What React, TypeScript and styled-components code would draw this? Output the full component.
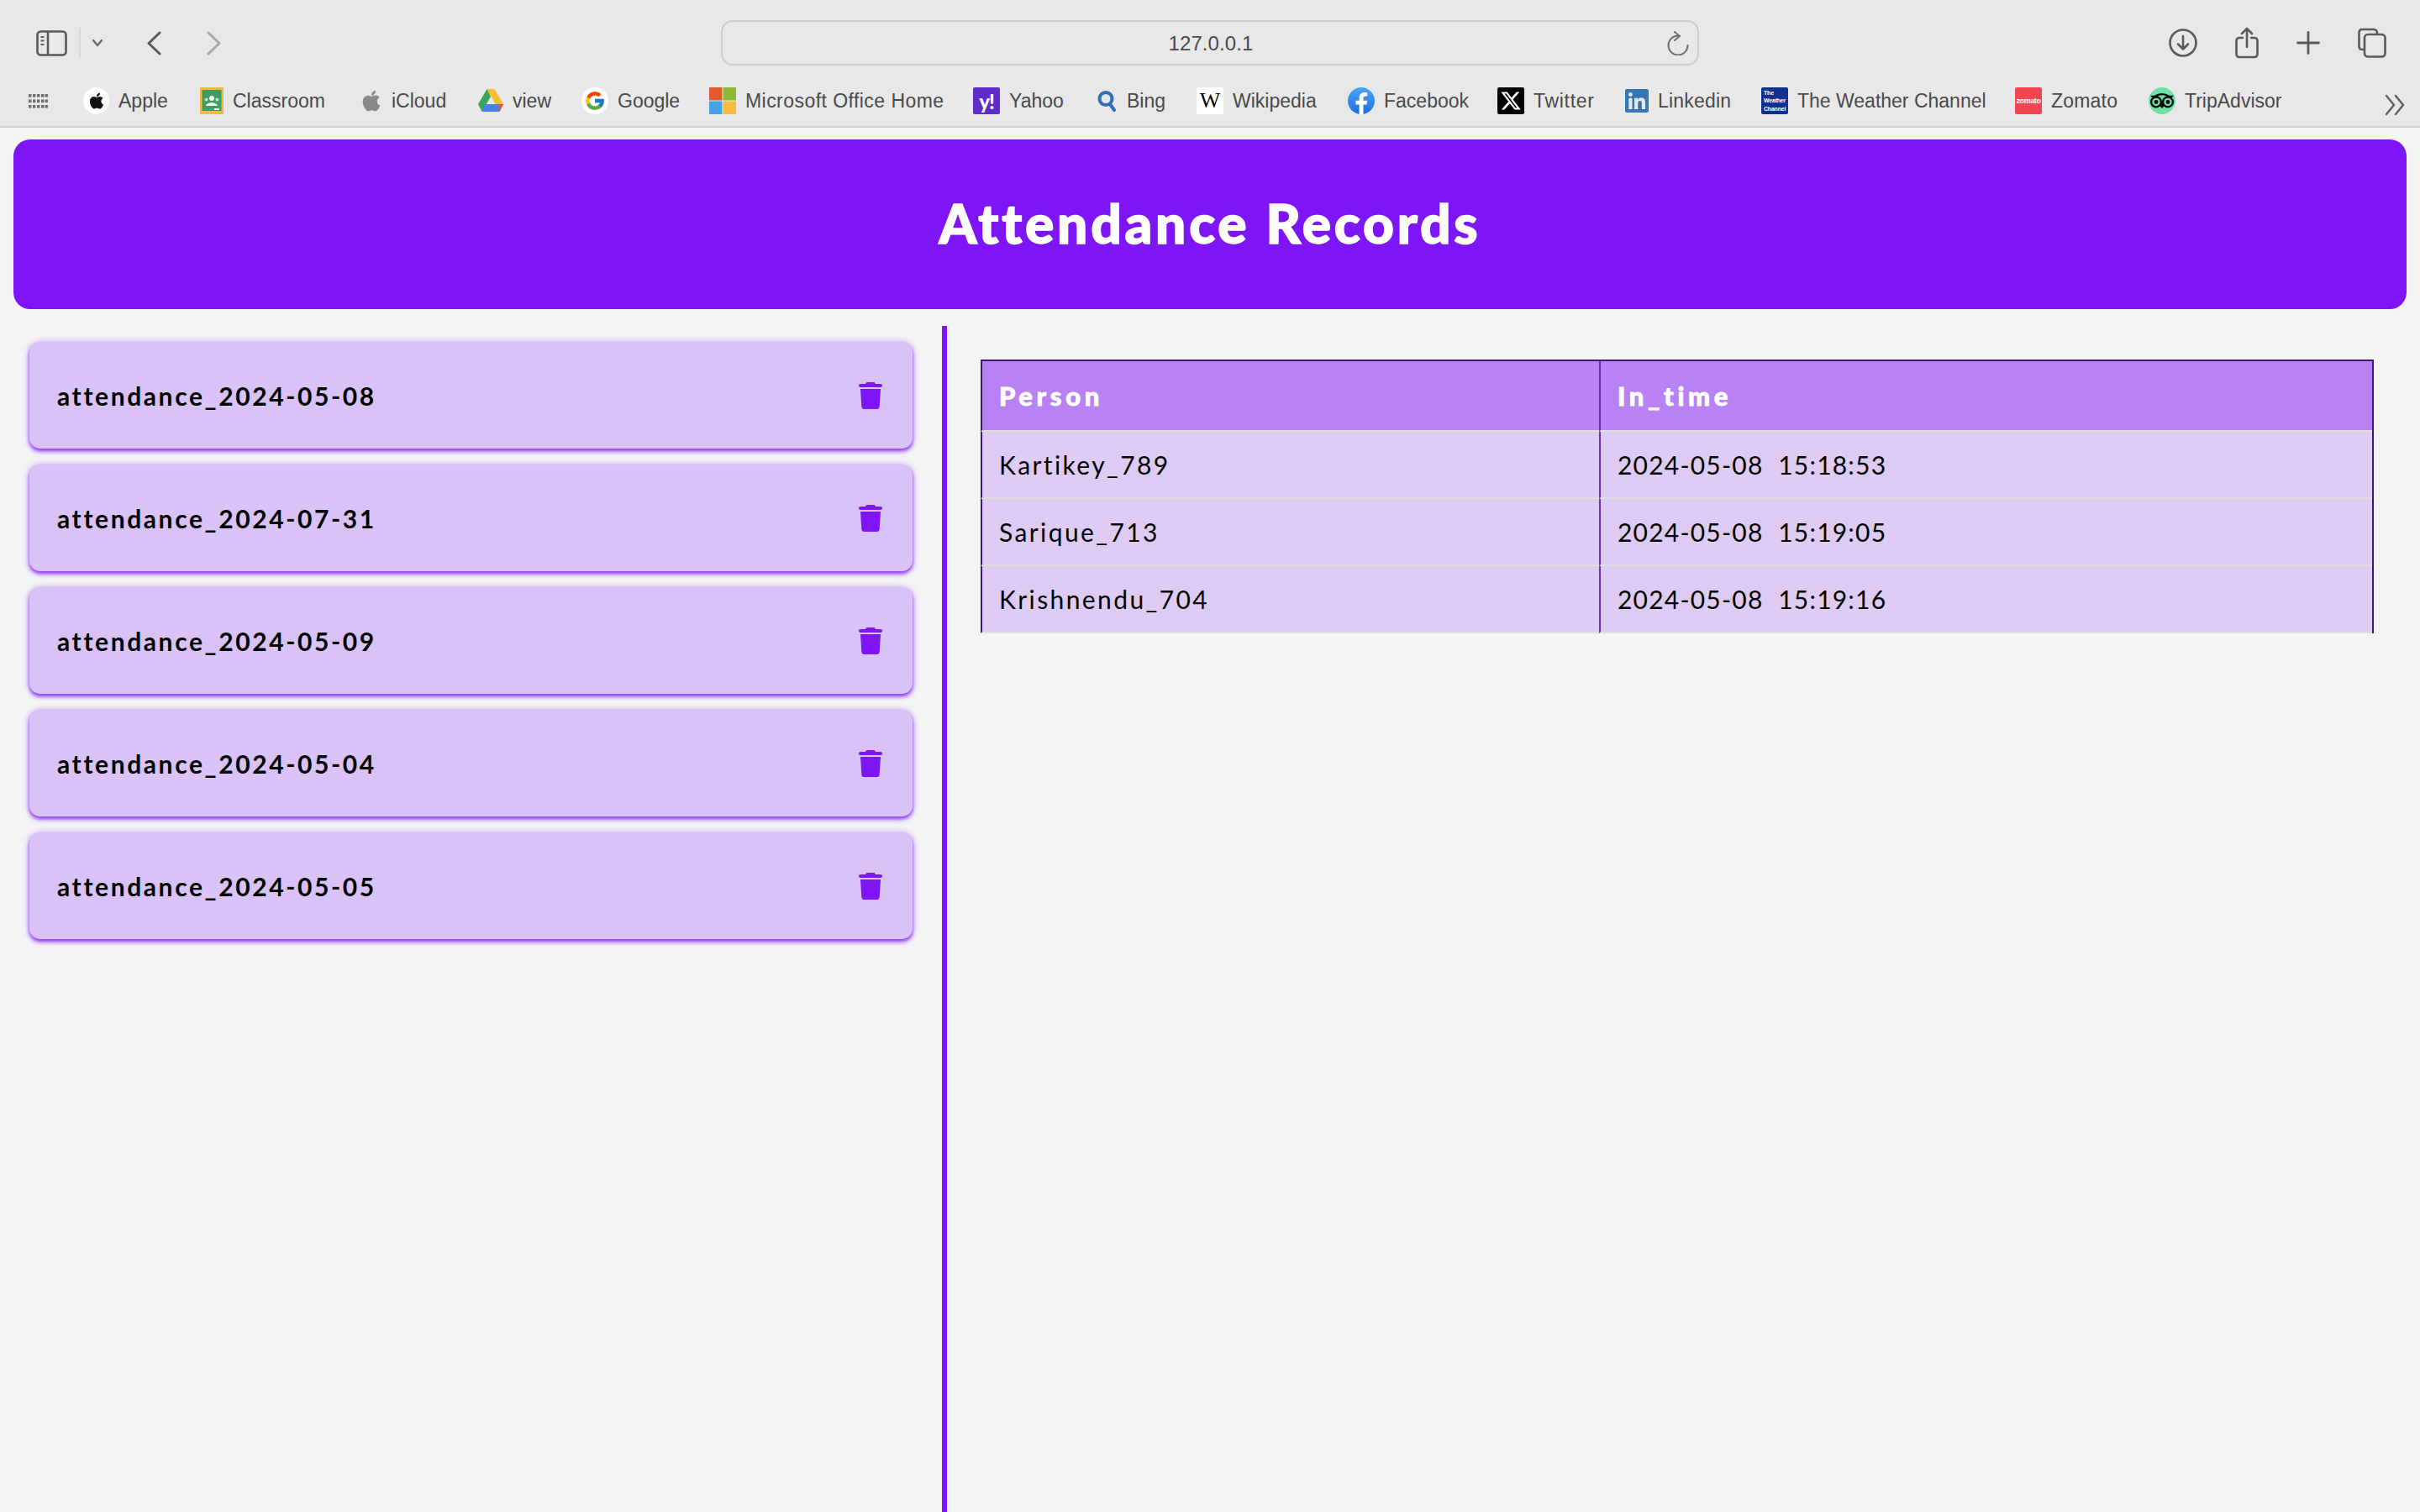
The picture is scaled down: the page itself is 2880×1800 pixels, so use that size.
import { ReactNode } from 'react';
import styled, { createGlobalStyle } from 'styled-components';
import { FaApple, FaTrash, FaLinkedin, FaXTwitter } from 'react-icons/fa6';
import { FcGoogle } from 'react-icons/fc';
import { SiTripadvisor } from 'react-icons/si';

const PURPLE = '#7d15f6';
const CHROME_INK = '#4a4a4a';

const GlobalStyle = createGlobalStyle`
  * { box-sizing: border-box; }
  html, body { margin: 0; padding: 0; }
  body { background: #f4f4f4; font-family: "Lato", "Open Sans", sans-serif; }
`;

const Page = styled.div`
  display: flex;
  flex-direction: column;
  height: 1800px;
  overflow: hidden;
`;

const Chrome = styled.div`
  height: 152px;
  flex-shrink: 0;
  padding-top: 24px;
  background: #e8e8e8;
  border-bottom: 2px solid #d0d0d0;
  font-family: "Liberation Sans", Arial, sans-serif;
  color: ${CHROME_INK};
`;

const Toolbar = styled.div`
  display: grid;
  grid-template-columns: 858px 1164px 1fr;
  height: 54px;
`;

const ToolbarLeft = styled.div`
  display: flex;
  align-items: center;
  padding-left: 43px;
`;

const Separator = styled.span`
  width: 2px;
  height: 36px;
  margin: 0 13px 0 14px;
  background: #d8d8d8;
`;

const NavButton = styled.span<{ $gap: number }>`
  display: flex;
  margin-left: ${(p) => p.$gap}px;
`;

const UrlBar = styled.div`
  display: flex;
  align-items: center;
  justify-content: center;
  position: relative;
  padding: 2px 0 0 2px;
  border: 2px solid #cdcdcd;
  border-radius: 14px;
  font-size: 24px;
  letter-spacing: 0.1px;
`;

const Reload = styled.span`
  position: absolute;
  right: 10px;
  top: 11px;
  display: flex;
`;

const ToolbarRight = styled.div`
  display: flex;
  align-items: center;
  justify-content: flex-end;
  gap: 45px;
  padding-right: 40px;
`;

const BookmarkBar = styled.div`
  display: flex;
  align-items: center;
  height: 32px;
  margin-top: 26px;
  position: relative;
  padding-left: 34px;
`;

const AppsGrid = styled.span`
  display: flex;
  width: 65px;
`;

const Bookmark = styled.div<{ $width: number; $track?: number }>`
  display: flex;
  align-items: center;
  width: ${(p) => p.$width}px;
  flex-shrink: 0;
  white-space: nowrap;
  font-size: 23px;
  letter-spacing: ${(p) => p.$track || 0}px;
`;

const FavSlot = styled.span<{ $width: number }>`
  display: flex;
  align-items: center;
  justify-content: center;
  width: ${(p) => p.$width}px;
  height: 32px;
  flex-shrink: 0;
  margin-right: 11px;
`;

const FavTile = styled.span<{ $bg: string; $color?: string; $round?: boolean }>`
  display: flex;
  align-items: center;
  justify-content: center;
  width: 32px;
  height: 32px;
  overflow: hidden;
  background: ${(p) => p.$bg};
  color: ${(p) => p.$color || '#fff'};
  border-radius: ${(p) => (p.$round ? '50%' : '2px')};
`;

const YahooMark = styled.span`
  font: 900 24px "Lato", sans-serif;
  letter-spacing: -1px;
`;

const WikiMark = styled.span`
  font: 400 26px/32px "Liberation Serif", serif;
`;

const WeatherMark = styled.span`
  font: 700 7px/9.5px "Liberation Sans Narrow", "Liberation Sans", sans-serif;
  padding-left: 3px;
  width: 100%;
  letter-spacing: -0.2px;
`;

const ZomatoMark = styled.span`
  font: 700 9px "Liberation Sans", sans-serif;
  letter-spacing: -0.4px;
`;

const MoreButton = styled.span`
  position: absolute;
  left: 2838px;
  top: 8px;
  display: flex;
`;

const Banner = styled.header`
  display: flex;
  align-items: center;
  justify-content: center;
  flex-shrink: 0;
  height: 202px;
  margin: 14px 16px 0;
  padding-bottom: 3px;
  background: ${PURPLE};
  border-radius: 20px;
`;

const Title = styled.h1`
  margin: 0;
  font-family: "Lato", sans-serif;
  font-weight: 900;
  font-size: 64px;
  line-height: 1;
  letter-spacing: 3.8px;
  color: #fff;
  -webkit-text-stroke: 1.5px #fff;
`;

const Columns = styled.div`
  display: flex;
  flex: 1;
  margin-top: 20px;
  min-height: 0;
`;

const FileList = styled.aside`
  display: flex;
  flex-direction: column;
  gap: 19px;
  width: 1127px;
  flex-shrink: 0;
  padding: 19px 35px 0;
  border-right: 6px solid ${PURPLE};
`;

const FileCard = styled.div`
  display: flex;
  align-items: center;
  justify-content: space-between;
  height: 127px;
  padding: 0 36px 0 33px;
  background: #d8c2f6;
  border-radius: 13px;
  box-shadow: 0 3px 4px rgba(125, 21, 246, 0.8), 0 1px 10px rgba(125, 21, 246, 0.4);
`;

const FileName = styled.span`
  font-weight: 700;
  font-size: 30px;
  letter-spacing: 2.6px;
  color: #000;
`;

const DeleteIcon = styled(FaTrash)`
  width: 28px;
  height: 32px;
  color: ${PURPLE};
`;

const TablePanel = styled.main`
  flex: 1;
  padding: 40px 57px 0 40px;
`;

const RecordTable = styled.table`
  width: 100%;
  table-layout: fixed;
  border-collapse: separate;
  border-spacing: 0;
  border-top: 2px solid #3a1a6e;
  border-right: 2px solid #3a1a6e;
`;

const HeadCell = styled.th<{ $width: number; $first?: boolean }>`
  width: ${(p) => p.$width}px;
  height: 84px;
  padding: 0 0 0 20px;
  text-align: left;
  background: #b882f4;
  color: #fff;
  font-weight: 900;
  font-size: 31px;
  letter-spacing: 4.6px;
  -webkit-text-stroke: 0.8px #fff;
  border-left: 2px solid ${(p) => (p.$first ? '#3a1a6e' : '#6a2db0')};
  border-bottom: 2px solid #dddddd;
`;

const BodyCell = styled.td<{ $first?: boolean; $track: number }>`
  height: 80px;
  padding: 0 0 0 20px;
  background: #ddcbf3;
  color: #000;
  font-size: 30px;
  letter-spacing: ${(p) => p.$track}px;
  white-space: pre;
  border-left: 2px solid ${(p) => (p.$first ? '#3a1a6e' : '#6a2db0')};
  border-bottom: 2px solid #dddddd;
`;

const SidebarIcon = () => (
  <svg width="37" height="31" viewBox="0 0 37 31" fill="none" stroke="#5a5a5a" strokeWidth="2.6">
    <rect x="1.5" y="1.5" width="34" height="28" rx="4" />
    <path d="M14 1.5v28" />
    <path d="M5.5 8h4M5.5 12.5h4M5.5 17h4" strokeWidth="2" />
  </svg>
);

const ChevronSmall = () => (
  <svg width="14" height="10" viewBox="0 0 14 10" fill="none" stroke="#6a6a6a" strokeWidth="2.4" strokeLinecap="round" strokeLinejoin="round">
    <path d="M2 2l5 6 5-6" />
  </svg>
);

const Chevron = ({ flip, color }: { flip?: boolean; color: string }) => (
  <svg width="18" height="29" viewBox="0 0 18 29" fill="none" stroke={color} strokeWidth="3" strokeLinecap="round" strokeLinejoin="round">
    <path d={flip ? 'M2 2l13 12.5L2 27' : 'M16 2L3 14.5 16 27'} />
  </svg>
);

const ReloadIcon = () => (
  <svg width="26" height="29" viewBox="0 0 26 29" fill="none" stroke="#6e6e6e" strokeWidth="2" strokeLinecap="round" strokeLinejoin="round">
    <path d="M13 5.5A11.5 11.5 0 1 0 24.5 17" />
    <path d="M9 1l6 5-6 5" />
  </svg>
);

const DownloadIcon = () => (
  <svg width="34" height="34" viewBox="0 0 34 34" fill="none" stroke="#5a5a5a" strokeWidth="2.6" strokeLinecap="round" strokeLinejoin="round">
    <circle cx="17" cy="17" r="15.5" />
    <path d="M17 9v15M11 18.5l6 6 6-6" />
  </svg>
);

const ShareIcon = () => (
  <svg width="28" height="38" viewBox="0 0 28 38" fill="none" stroke="#5a5a5a" strokeWidth="2.6" strokeLinecap="round" strokeLinejoin="round">
    <path d="M9 13H5a3.5 3.5 0 0 0-3.5 3.5v16A3.5 3.5 0 0 0 5 36h18a3.5 3.5 0 0 0 3.5-3.5v-16A3.5 3.5 0 0 0 23 13h-4" />
    <path d="M14 24V2M8 8l6-6 6 6" />
  </svg>
);

const PlusIcon = () => (
  <svg width="28" height="28" viewBox="0 0 28 28" fill="none" stroke="#5a5a5a" strokeWidth="2.8" strokeLinecap="round">
    <path d="M14 1.5v25M1.5 14h25" />
  </svg>
);

const TabsIcon = () => (
  <svg width="34" height="36" viewBox="0 0 34 36" fill="none" stroke="#5a5a5a" strokeWidth="2.6" strokeLinejoin="round">
    <path d="M8 26H5a3.5 3.5 0 0 1-3.5-3.5v-17A3.5 3.5 0 0 1 5 2h14a4 4 0 0 1 4 4v2" />
    <rect x="8" y="8" width="24.5" height="26.5" rx="4" />
  </svg>
);

const AppsIcon = () => (
  <svg width="23" height="17" viewBox="0 0 23 17" fill="#6e6e6e">
    {[0, 6.5, 13].map((y) =>
      [0, 5, 10, 15, 19.5].map((x) => <rect key={`${x}-${y}`} x={x} y={y} width="3.4" height="3.6" />)
    )}
  </svg>
);

const DoubleChevron = () => (
  <svg width="24" height="26" viewBox="0 0 24 26" fill="none" stroke="#5e5e5e" strokeWidth="2.4" strokeLinecap="round" strokeLinejoin="round">
    <path d="M2 2l9 11-9 11M13 2l9 11-9 11" />
  </svg>
);

const ClassroomIcon = () => (
  <svg width="28" height="32" viewBox="0 0 28 32">
    <rect width="28" height="32" rx="1" fill="#f4b942" />
    <rect x="2.5" y="3" width="23" height="25" fill="#3f9f62" />
    <circle cx="14" cy="13" r="3" fill="#fff" />
    <path d="M7 22c1-5 13-5 14 0z" fill="#fff" />
    <circle cx="7.5" cy="14.5" r="2" fill="#bfe3cb" />
    <circle cx="20.5" cy="14.5" r="2" fill="#bfe3cb" />
    <rect x="17" y="25" width="6" height="2" fill="#fff" />
  </svg>
);

const DriveIcon = () => (
  <svg width="30" height="30" viewBox="0 0 30 30">
    <path d="M10.5 1h9L30 19h-9.5z" fill="#f5c02f" />
    <path d="M10.5 1L0 19l4.6 9 10.4-18z" fill="#3fa35b" />
    <path d="M8 19h22l-4.6 9H4.6z" fill="#4a7fe8" />
    <path d="M25.4 28L30 19h-5z" fill="#e8533c" />
  </svg>
);

const WindowsIcon = () => (
  <svg width="32" height="32" viewBox="0 0 32 32">
    <rect width="15.5" height="15.5" fill="#e25b30" />
    <rect x="16.5" width="15.5" height="15.5" fill="#8cb832" />
    <rect y="16.5" width="15.5" height="15.5" fill="#45a3ec" />
    <rect x="16.5" y="16.5" width="15.5" height="15.5" fill="#f6bc3c" />
  </svg>
);

const BingIcon = () => (
  <svg width="23" height="27" viewBox="0 0 23 27" fill="none" stroke="#2f6db5" strokeWidth="4" strokeLinecap="round">
    <circle cx="10" cy="10.5" r="7.5" />
    <path d="M15 17l5 7" />
  </svg>
);

const FacebookIcon = () => (
  <svg width="32" height="32" viewBox="0 0 32 32">
    <defs>
      <linearGradient id="fbGrad" x1="0" y1="0" x2="0" y2="1">
        <stop offset="0" stopColor="#4fa3f7" />
        <stop offset="1" stopColor="#1a6fe0" />
      </linearGradient>
    </defs>
    <circle cx="16" cy="16" r="16" fill="url(#fbGrad)" />
    <path d="M18.5 32V20.5h4l.7-4.7h-4.7v-3c0-1.4.6-2.4 2.6-2.4h2.2V6.4c-1-.2-2.3-.3-3.4-.3-3.9 0-6.3 2.3-6.3 6.2v3.5H9.5v4.7h4.1V32z" fill="#fff" />
  </svg>
);

type BookmarkData = { label: string; width: number; slot: number; track?: number; fav: ReactNode };

const BOOKMARKS: BookmarkData[] = [
  { label: 'Apple', width: 139, slot: 31, fav: <FavTile $bg="#fff" $color="#111" $round><FaApple size={22} /></FavTile> },
  { label: 'Classroom', width: 191, slot: 28, fav: <ClassroomIcon /> },
  { label: 'iCloud', width: 140, slot: 26, fav: <FaApple size={28} color="#8a8a8a" /> },
  { label: 'view', width: 123, slot: 30, fav: <DriveIcon /> },
  { label: 'Google', width: 152, slot: 32, fav: <FavTile $bg="#fff" $round><FcGoogle size={26} /></FavTile> },
  { label: 'Microsoft Office Home', width: 314, slot: 32, track: 0.45, fav: <WindowsIcon /> },
  { label: 'Yahoo', width: 147, slot: 32, fav: <FavTile $bg="#5f2bc9"><YahooMark>y!</YahooMark></FavTile> },
  { label: 'Bing', width: 119, slot: 25, fav: <BingIcon /> },
  { label: 'Wikipedia', width: 180, slot: 32, fav: <FavTile $bg="#fff" $color="#000"><WikiMark>W</WikiMark></FavTile> },
  { label: 'Facebook', width: 178, slot: 32, fav: <FacebookIcon /> },
  { label: 'Twitter', width: 152, slot: 32, track: 0.7, fav: <FavTile $bg="#000"><FaXTwitter size={26} /></FavTile> },
  { label: 'Linkedin', width: 162, slot: 28, track: 0.2, fav: <FaLinkedin size={32} color="#3577b5" /> },
  { label: 'The Weather Channel', width: 302, slot: 32, fav: <FavTile $bg="#12308f"><WeatherMark>The<br />Weather<br />Channel</WeatherMark></FavTile> },
  { label: 'Zomato', width: 159, slot: 32, track: 0.2, fav: <FavTile $bg="#ef4650"><ZomatoMark>zomato</ZomatoMark></FavTile> },
  { label: 'TripAdvisor', width: 170, slot: 32, fav: <FavTile $bg="#6fe0a8" $color="#0a0a0a" $round><SiTripadvisor size={28} /></FavTile> },
];

const FILES = [
  'attendance_2024-05-08',
  'attendance_2024-07-31',
  'attendance_2024-05-09',
  'attendance_2024-05-04',
  'attendance_2024-05-05',
];

const RECORDS = [
  ['Kartikey_789', '2024-05-08  15:18:53'],
  ['Sarique_713', '2024-05-08  15:19:05'],
  ['Krishnendu_704', '2024-05-08  15:19:16'],
];

export default function App() {
  return (
    <Page>
      <GlobalStyle />
      <Chrome>
        <Toolbar>
          <ToolbarLeft>
            <SidebarIcon />
            <Separator />
            <ChevronSmall />
            <NavButton $gap={51}><Chevron color="#5a5a5a" /></NavButton>
            <NavButton $gap={54}><Chevron flip color="#a8a8a8" /></NavButton>
          </ToolbarLeft>
          <UrlBar>
            127.0.0.1
            <Reload><ReloadIcon /></Reload>
          </UrlBar>
          <ToolbarRight>
            <DownloadIcon />
            <ShareIcon />
            <PlusIcon />
            <TabsIcon />
          </ToolbarRight>
        </Toolbar>
        <BookmarkBar>
          <AppsGrid><AppsIcon /></AppsGrid>
          {BOOKMARKS.map((b) => (
            <Bookmark key={b.label} $width={b.width} $track={b.track}>
              <FavSlot $width={b.slot}>{b.fav}</FavSlot>
              {b.label}
            </Bookmark>
          ))}
          <MoreButton><DoubleChevron /></MoreButton>
        </BookmarkBar>
      </Chrome>
      <Banner>
        <Title>Attendance Records</Title>
      </Banner>
      <Columns>
        <FileList>
          {FILES.map((name) => (
            <FileCard key={name}>
              <FileName>{name}</FileName>
              <DeleteIcon />
            </FileCard>
          ))}
        </FileList>
        <TablePanel>
          <RecordTable>
            <thead>
              <tr>
                <HeadCell $width={736} $first>Person</HeadCell>
                <HeadCell $width={920}>In_time</HeadCell>
              </tr>
            </thead>
            <tbody>
              {RECORDS.map(([person, time]) => (
                <tr key={person}>
                  <BodyCell $first $track={2.4}>{person}</BodyCell>
                  <BodyCell $track={1.2}>{time}</BodyCell>
                </tr>
              ))}
            </tbody>
          </RecordTable>
        </TablePanel>
      </Columns>
    </Page>
  );
}
